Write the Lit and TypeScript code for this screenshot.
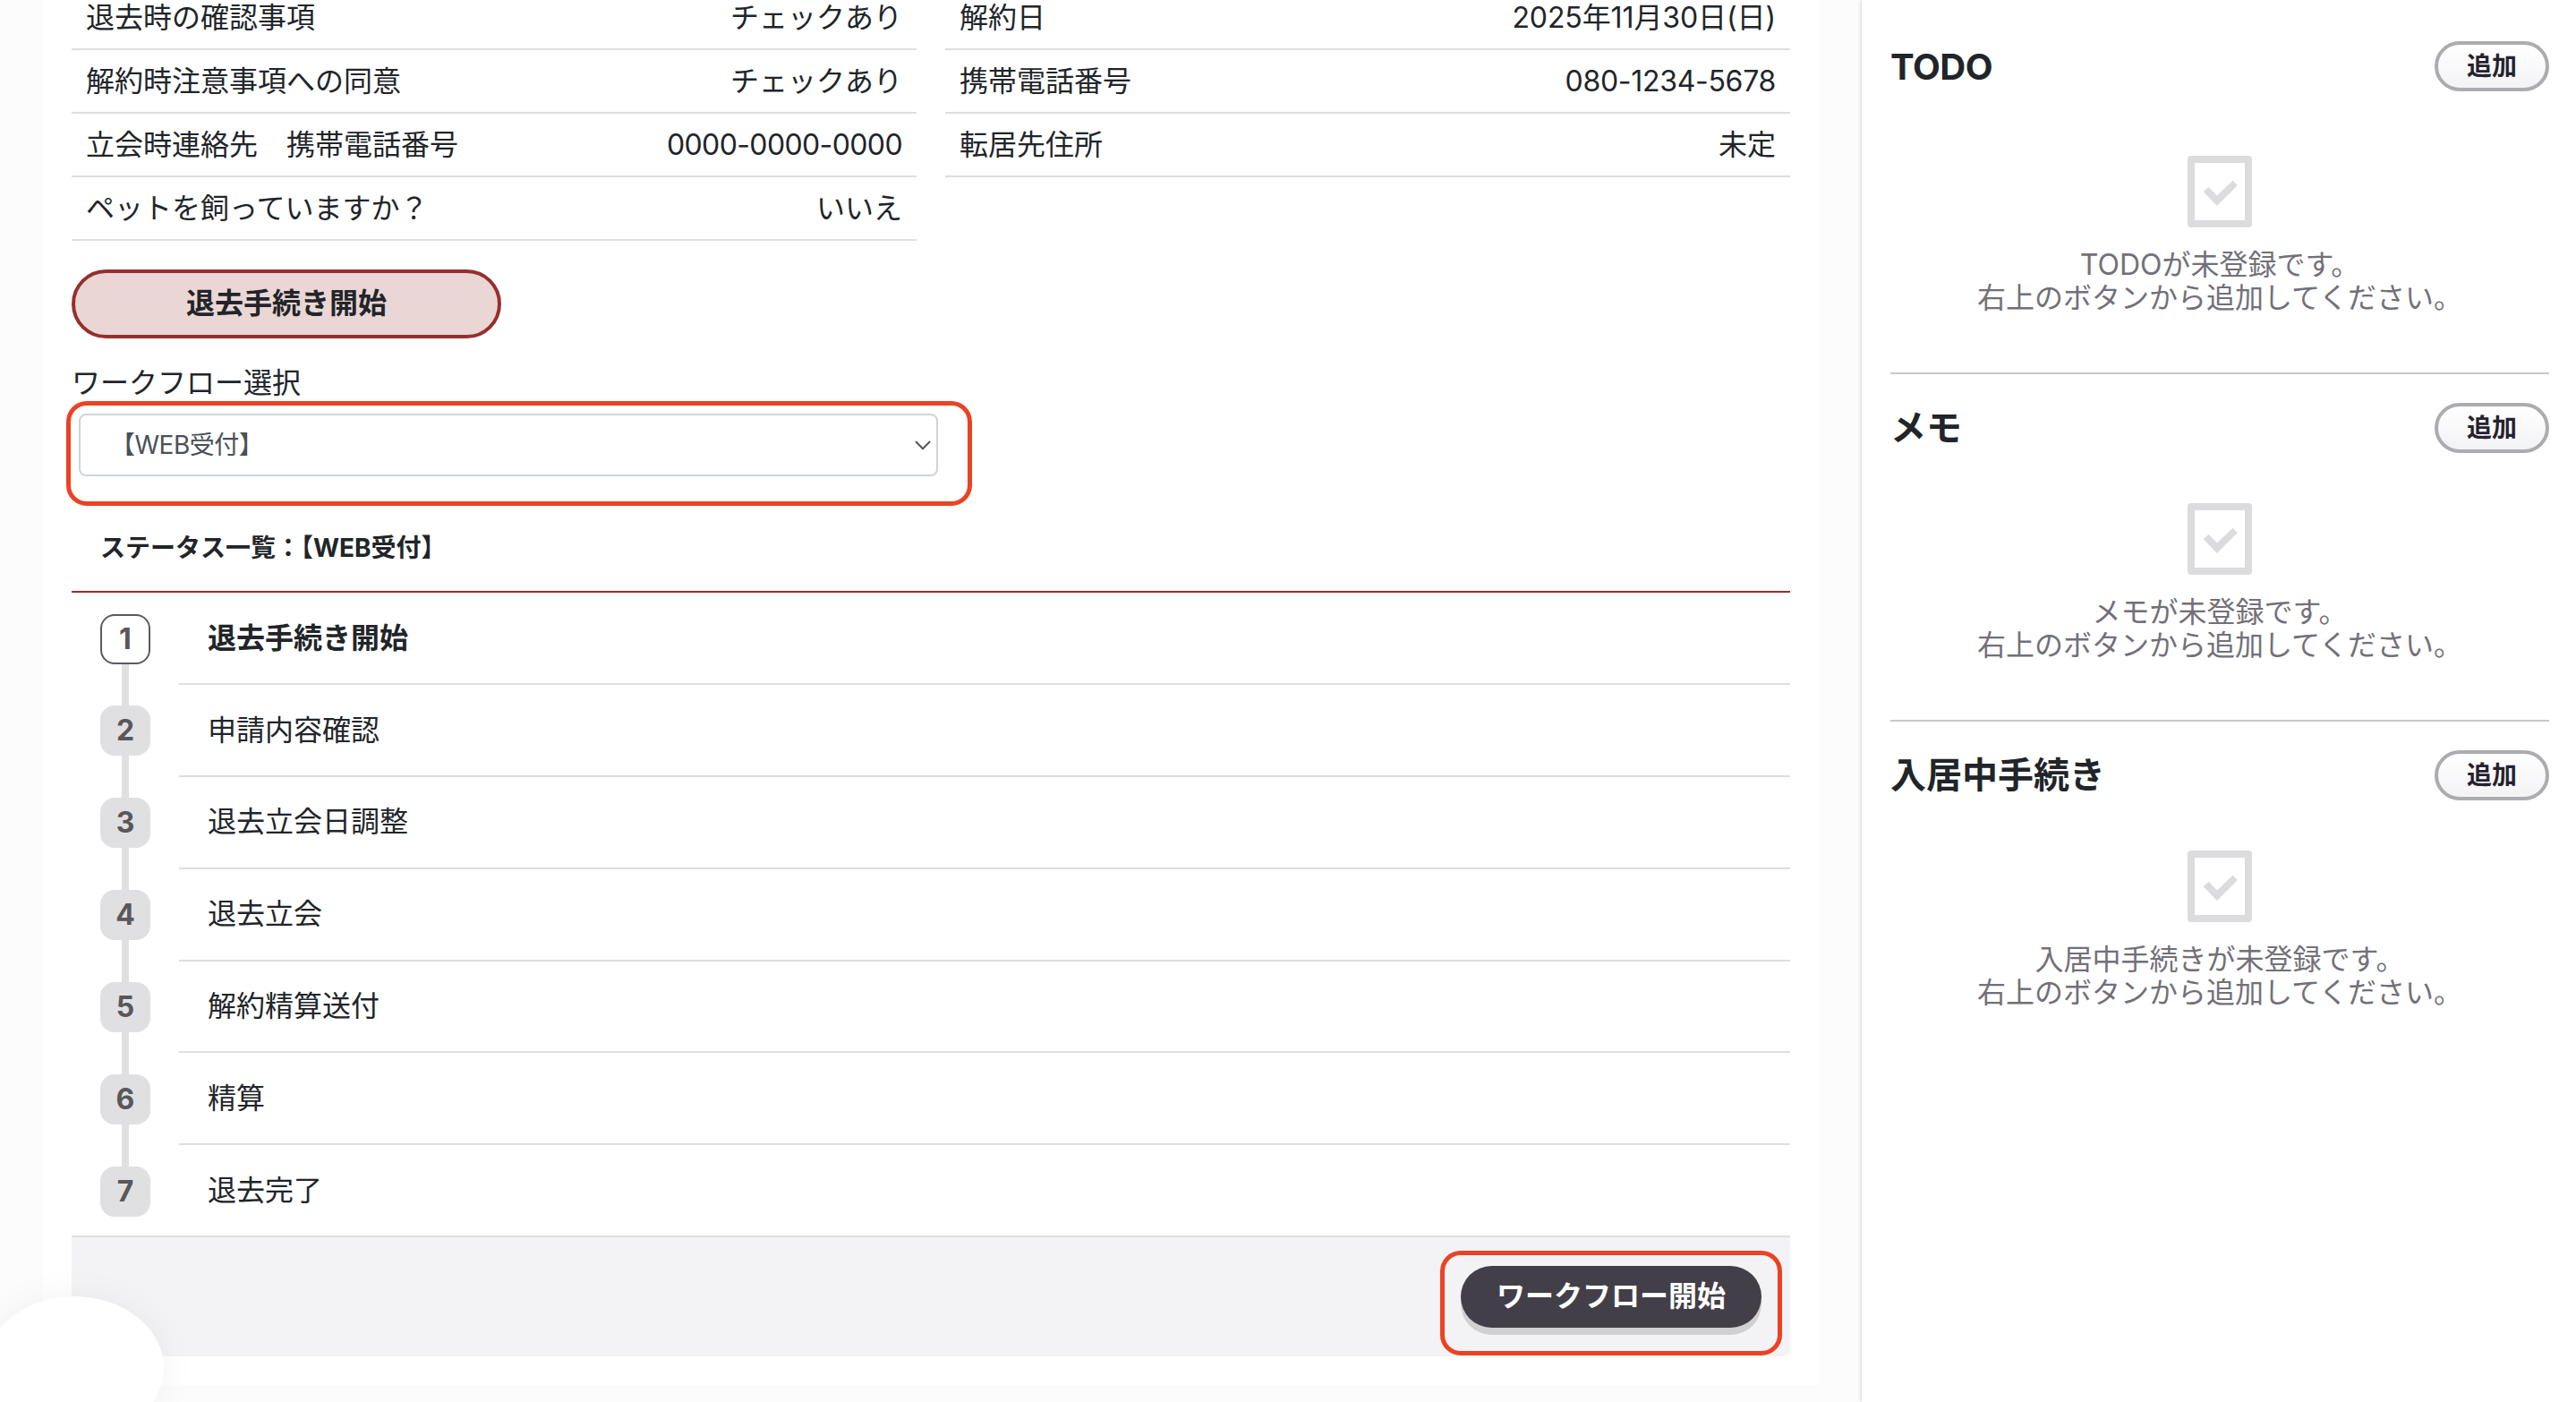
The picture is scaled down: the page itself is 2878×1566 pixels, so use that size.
import { LitElement, html, css } from "lit";
import { customElement, property } from "lit/decorators.js";
import { styleMap } from "lit/directives/style-map.js";

interface Detail {
  label: string;
  value: string;
  tracking?: number;
}

const applicantLeft: Detail[] = [
  { label: "退去時の確認事項", value: "チェックあり" },
  { label: "解約時注意事項への同意", value: "チェックあり" },
  { label: "立会時連絡先　携帯電話番号", value: "0000-0000-0000", tracking: -0.62 },
  { label: "ペットを飼っていますか？", value: "いいえ" },
];
const applicantRight: Detail[] = [
  { label: "解約日", value: "2025年11月30日(日)", tracking: -0.1 },
  { label: "携帯電話番号", value: "080-1234-5678", tracking: -0.3 },
  { label: "転居先住所", value: "未定" },
];
const steps = [
  "退去手続き開始",
  "申請内容確認",
  "退去立会日調整",
  "退去立会",
  "解約精算送付",
  "精算",
  "退去完了",
];

@customElement("detail-list")
class DetailList extends LitElement {
  @property({ attribute: false }) rows: Detail[] = [];
  static styles = css`
    :host { display: block; width: 944px; }
    .row {
      box-sizing: border-box;
      height: 71px;
      padding: 0 16px;
      display: flex;
      align-items: center;
      justify-content: space-between;
      border-bottom: 2px solid #dedee0;
      white-space: nowrap;
    }
  `;
  render() {
    return this.rows.map(
      ({ label, value, tracking = 0 }) => html`<div class="row">
        <span>${label}</span>
        <span style=${styleMap({ letterSpacing: `${tracking}px` })}>${value}</span>
      </div>`
    );
  }
}

@customElement("step-list")
class StepList extends LitElement {
  @property({ attribute: false }) items: string[] = [];
  static styles = css`
    :host { display: block; border-bottom: 2px solid #dedee0; }
    .step { display: flex; height: 102.83px; }
    .step:last-child { height: 100.83px; }
    .rail {
      width: 120px;
      display: flex;
      flex-direction: column;
      align-items: center;
    }
    .stem { width: 8px; height: 23.3px; background: #e0e0e2; }
    .stem.hidden { background: transparent; }
    .stem.tail { flex: 1; height: auto; }
    .badge {
      box-sizing: border-box;
      width: 56px;
      height: 56px;
      border-radius: 16px;
      background: #e0e0e2;
      color: #58585a;
      font-size: 32px;
      font-weight: 700;
      display: flex;
      align-items: center;
      justify-content: center;
    }
    .first .badge { background: #fff; border: 2px solid #5c5a62; }
    .name {
      flex: 1;
      box-sizing: border-box;
      border-bottom: 2px solid #dedee0;
      padding: 0 32px;
      display: flex;
      align-items: center;
    }
    .first .name { font-weight: 700; }
    .step:last-child .name { border-bottom: none; }
  `;
  render() {
    const last = this.items.length - 1;
    return this.items.map(
      (name, i) => html`<div class="step ${i === 0 ? "first" : ""}">
        <div class="rail">
          <div class="stem ${i === 0 ? "hidden" : ""}"></div>
          <div class="badge">${i + 1}</div>
          <div class="stem tail ${i === last ? "hidden" : ""}"></div>
        </div>
        <div class="name">${name}</div>
      </div>`
    );
  }
}

@customElement("side-section")
class SideSection extends LitElement {
  @property() heading = "";
  static styles = css`
    :host { display: block; }
    .head { display: flex; justify-content: space-between; align-items: center; height: 56px; }
    .title { font-size: 40px; font-weight: 700; line-height: 56px; letter-spacing: var(--title-tracking, 0); padding-top: var(--title-drop, 0); }
    .add {
      box-sizing: border-box;
      width: 128px;
      height: 56px;
      border: 4px solid #acacb0;
      border-radius: 28px;
      background: linear-gradient(#fff, #f3f3f6);
      color: #26222e;
      font: inherit;
      font-size: 28px;
      font-weight: 600;
      padding: 0;
      display: flex;
      align-items: center;
      justify-content: center;
    }
    .empty {
      display: flex;
      flex-direction: column;
      align-items: center;
      padding-top: var(--empty-gap, 56px);
      color: #727078;
      line-height: 37.4px;
      text-align: center;
    }
    .empty svg { display: block; margin-bottom: 22.5px; }
  `;
  render() {
    return html`
      <div class="head">
        <span class="title">${this.heading}</span>
        <button class="add">追加</button>
      </div>
      <div class="empty">
        <svg width="72" height="80" viewBox="0 0 72 80">
          <path fill="#dcdcde" fill-rule="evenodd" d="M4 0H68A4 4 0 0 1 72 4V76A4 4 0 0 1 68 80H4A4 4 0 0 1 0 76V4A4 4 0 0 1 4 0ZM8 8V72H64V8Z" />
          <path d="M17.7 40.3 23.4 34.8 32.9 44.6 50.6 27.7 55.8 33 32.9 56Z" fill="#dcdcde" />
        </svg>
        <div>${this.heading}が未登録です。</div>
        <div>右上のボタンから追加してください。</div>
      </div>
    `;
  }
}

@customElement("app-root")
class AppRoot extends LitElement {
  static styles = css`
    :host {
      display: block;
      position: relative;
      width: 2878px;
      height: 1566px;
      overflow: hidden;
      background: #fcfcfc;
      color: #212529;
      font-family: Inter, "Noto Sans CJK JP", sans-serif;
      font-size: 32px;
      line-height: 48px;
    }
    .page { display: flex; justify-content: space-between; height: 100%; }
    .card {
      box-sizing: border-box;
      width: 1984px;
      height: 1547px;
      margin-left: 48px;
      padding: 0 32px;
      background: #fff;
      overflow: hidden;
    }
    .details { display: flex; justify-content: space-between; margin-top: -15px; }
    .start {
      box-sizing: border-box;
      display: flex;
      align-items: center;
      justify-content: center;
      width: 480px;
      height: 77px;
      margin: 32px 0 0;
      padding: 0 0 1px;
      border: 4px solid #95302e;
      border-radius: 38.5px;
      background: #ead6d5;
      color: #212529;
      font: inherit;
      font-weight: 700;
    }
    .label { margin-top: 26px; height: 48px; }
    .callout {
      box-sizing: border-box;
      border: 5px solid #ec4224;
      border-radius: 23px;
    }
    .pick { width: 1012px; height: 117px; margin: -4px 0 0 -6px; padding: 9px; }
    .select {
      box-sizing: border-box;
      width: 960px;
      height: 70px;
      border: 2px solid #ced4da;
      border-radius: 8px;
      background: #fff;
      color: #495057;
      font-size: 28px;
      display: flex;
      align-items: center;
      justify-content: space-between;
      padding: 0 6px 0 33px;
    }
    .choice { letter-spacing: -0.5px; }
    .status {
      font-size: 28px;
      font-weight: 700;
      height: 93.3px;
      padding: 0 0 2px 32px;
      display: flex;
      align-items: center;
      border-bottom: 2px solid #95302e;
    }
    .foot {
      box-sizing: border-box;
      height: 133px;
      background: #f3f3f6;
      border-radius: 0 0 8px 8px;
      display: flex;
      justify-content: flex-end;
      padding: 15px 9px 0;
    }
    .run { width: 382px; height: 117px; padding: 12px 18px; }
    .go {
      display: block;
      width: 336px;
      height: 69px;
      padding: 0 0 1px;
      border: none;
      border-radius: 34.5px;
      background: #433f49;
      box-shadow: 0 8px 0 #d0d0d3;
      color: #fff;
      font: inherit;
      font-weight: 700;
    }
    .side {
      box-sizing: border-box;
      width: 798px;
      padding: 46px 30px 0 32px;
      background: #fff;
      box-shadow: 0 0 4px rgba(0, 0, 0, 0.25);
    }
    .side side-section { height: 354px; border-bottom: 2px solid #c8c8ca; margin-bottom: 32px; }
    .side side-section:first-child {
      height: 370px;
      --empty-gap: 72px;
      --title-tracking: -0.5px;
      --title-drop: 2px;
    }
    .side side-section:last-child { border-bottom: none; }
    .bubble {
      position: absolute;
      left: -17px;
      top: 1448px;
      width: 200px;
      height: 160px;
      border-radius: 50%;
      background: #fff;
      box-shadow: 0 0 40px rgba(0, 0, 0, 0.05);
    }
  `;
  render() {
    return html`
      <div class="page">
        <main class="card">
          <div class="details">
            <detail-list .rows=${applicantLeft}></detail-list>
            <detail-list .rows=${applicantRight}></detail-list>
          </div>
          <button class="start">退去手続き開始</button>
          <div class="label">ワークフロー選択</div>
          <div class="callout pick">
            <div class="select">
              <span class="choice">【WEB受付】</span>
              <svg width="18" height="11" viewBox="0 0 18 11">
                <path d="M1 1 9 9.2 17 1" fill="none" stroke="#55565a" stroke-width="2" />
              </svg>
            </div>
          </div>
          <div class="status">ステータス一覧：【WEB受付】</div>
          <step-list .items=${steps}></step-list>
          <div class="foot">
            <div class="callout run"><button class="go">ワークフロー開始</button></div>
          </div>
        </main>
        <aside class="side">
          <side-section heading="TODO"></side-section>
          <side-section heading="メモ"></side-section>
          <side-section heading="入居中手続き"></side-section>
        </aside>
      </div>
      <div class="bubble"></div>
    `;
  }
}
